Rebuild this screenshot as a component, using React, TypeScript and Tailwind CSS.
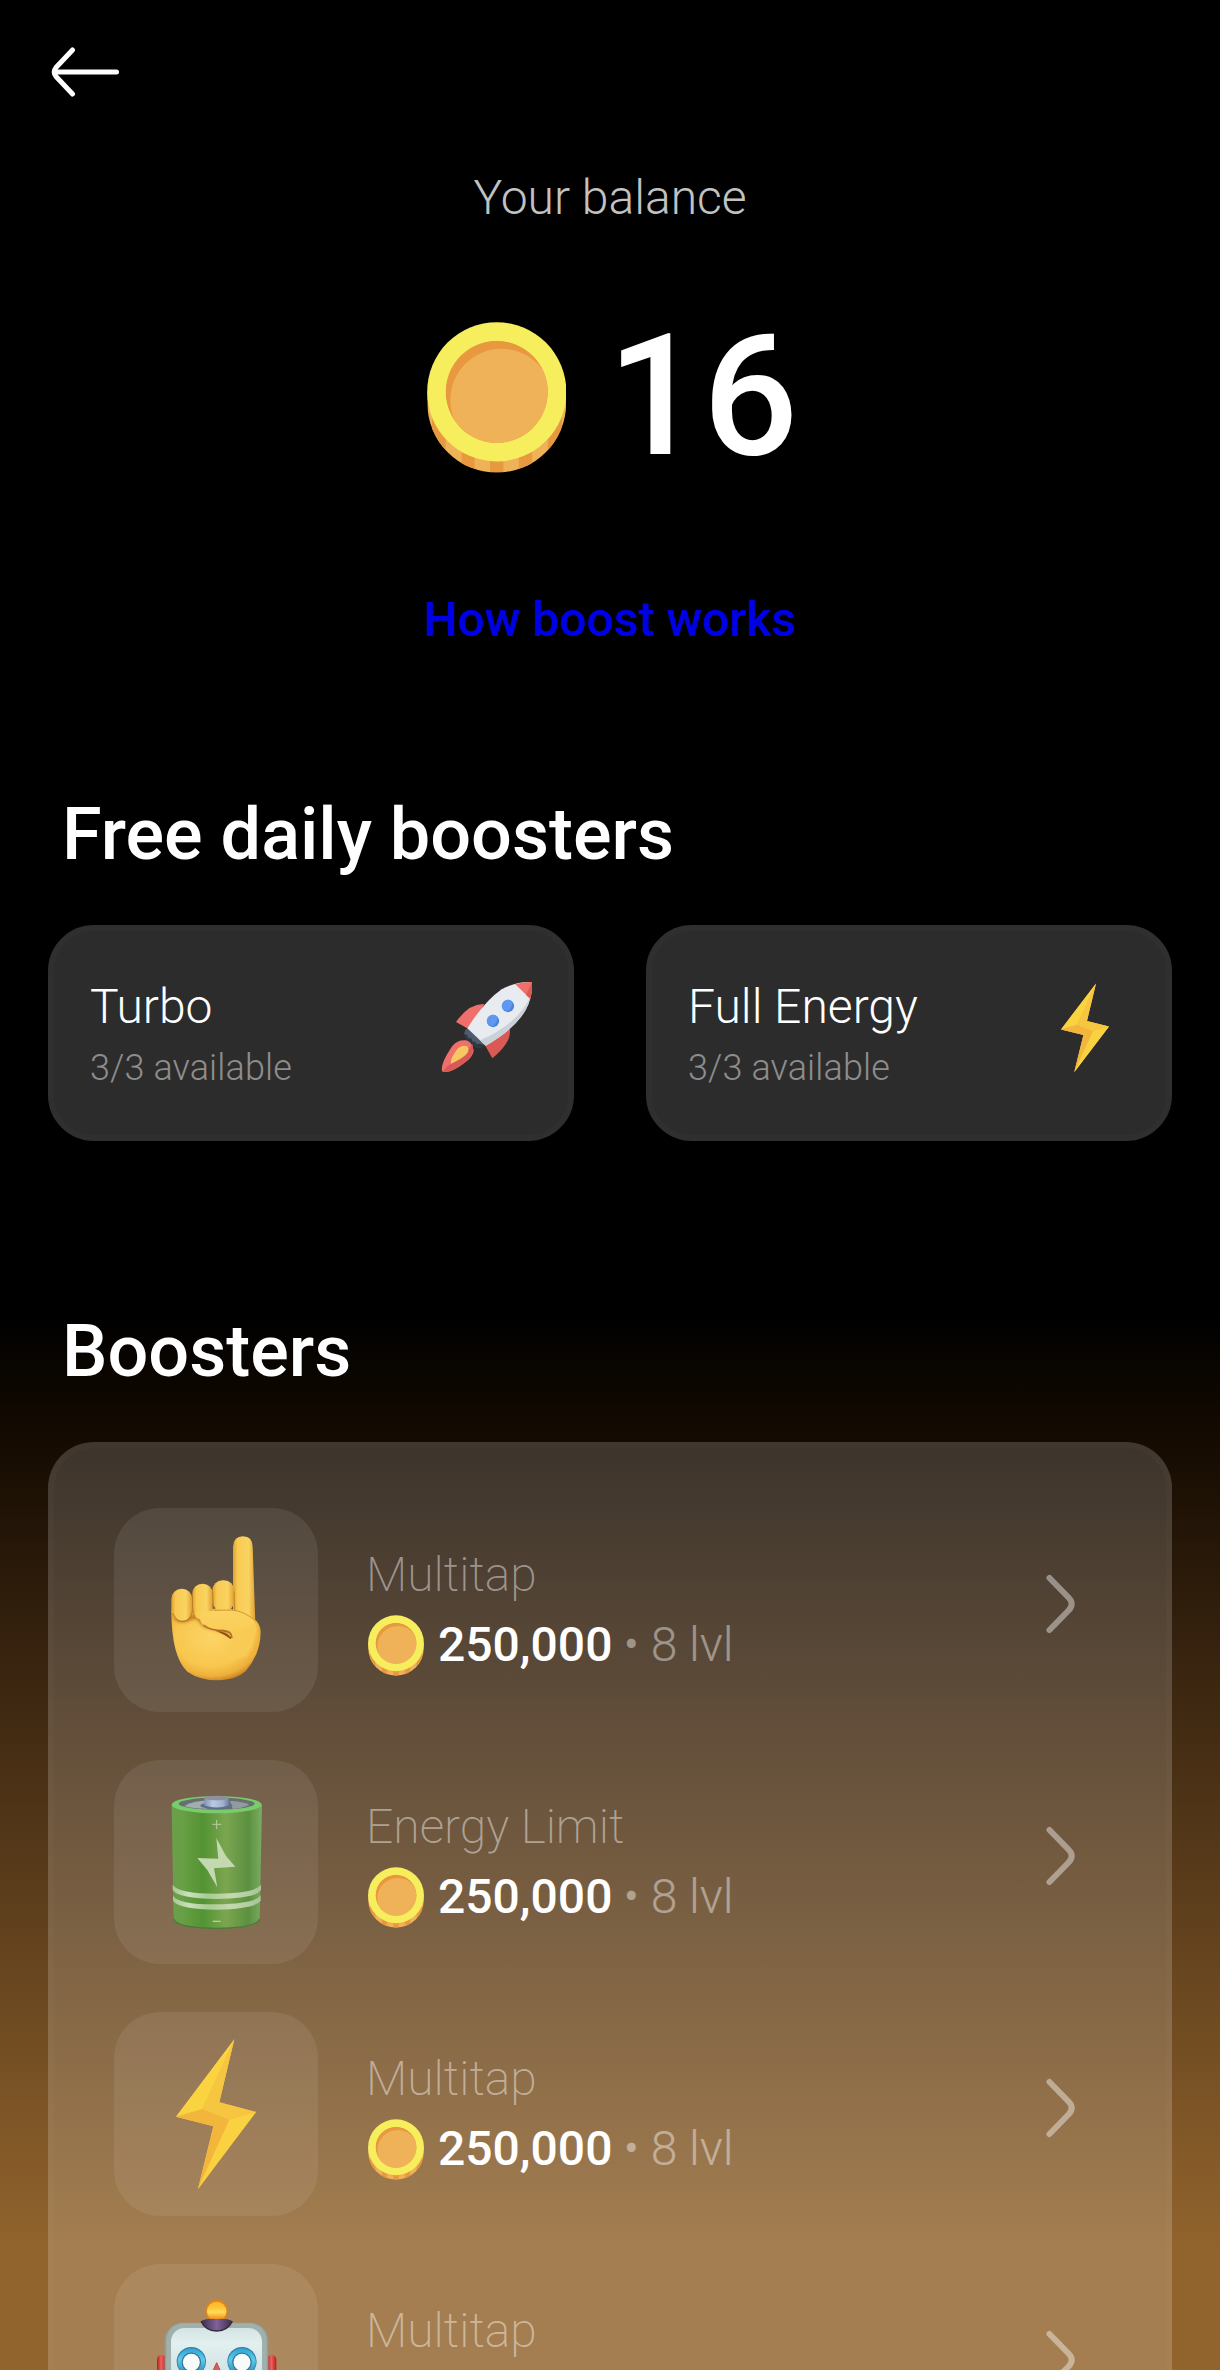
import React from "react";

function BackArrow() {
  return (
    <svg width="72" height="54" viewBox="0 0 72 54" fill="none" stroke="#fff" strokeWidth="5" strokeLinecap="round" strokeLinejoin="round">
      <path d="M22.5 5 L6 22.5 Q2.500 27 6 31.5 L22.5 49" />
      <path d="M5 27 H66.500" />
    </svg>
  );
}

function Chevron() {
  return (
    <svg className="shrink-0" width="34" height="64" viewBox="0 0 34 64" fill="none" stroke="#fff" strokeOpacity="0.42" strokeWidth="6" strokeLinecap="round">
      <path d="M5.5 6 L24.5 25.5 Q31 32 24.5 38.5 L5.5 58" />
    </svg>
  );
}

function Coin({ className, id }: { className: string; id: string }) {
  return (
    <svg className={className} viewBox="82 66 418 452">
      <defs>
        <clipPath id={`${id}-rim`}>
          <path d="M83 275 V309 A208 208 0 0 0 499 309 V275 Z" />
        </clipPath>
        <clipPath id={`${id}-face`}>
          <circle cx="291" cy="275" r="153" />
        </clipPath>
      </defs>
      <g clipPath={`url(#${id}-rim)`}>
        <rect x="82" y="270" width="418" height="250" fill="#f0b259" />
        <path fill="#e8993f" d="M97 275h41v245h-41zM186 275h39v245h-39zM271 275h40v245h-40zM357 275h40v245h-40zM444 275h42v245h-42z" />
      </g>
      <circle cx="291" cy="275" r="208.500" fill="#f6ee5d" />
      <g clipPath={`url(#${id}-face)`}>
        <circle cx="291" cy="275" r="154" fill="#e8993f" />
        <circle cx="305" cy="299" r="153" fill="#f0b259" />
      </g>
    </svg>
  );
}

function Rocket() {
  return (
    <svg className="h-[130px] w-[140px]" viewBox="0 0 420 390">
      <path d="M196 132 Q150 130 111 186 L150 208 Z" fill="#ee6f6b" />
      <path d="M272 207 Q280 245 220 295 L198 256 Z" fill="#d95a55" />
      <path d="M146 204 L200 256 Q188 266 170 261 Q142 245 136 222 Q136 210 146 204 Z" fill="#4e5b6b" />
      <path d="M136 222 l9 3 l3 9 l9 1 l4 10 l8 0 l3 8 l10 -2 l18 5 q-14 12 -30 5 Q142 245 136 222Z" fill="#2d3845" />
      <path d="M145 205 Q195 125 248 88 Q290 64 338 66 Q342 110 320 150 Q285 210 200 257 Z" fill="#e8ebef" />
      <path d="M333 116 Q345 60 331 117 Q290 195 183 241 L200 257 Q285 210 320 150 Q330 132 333 116Z" fill="#cbd1d9" />
      <path d="M289 73 Q313 65 339 66 Q341 92 334 117 Z" fill="#ee6f6b" />
      <path d="M339 66 Q341 92 334 117 L321 104 Q331 85 339 66Z" fill="#d95a55" />
      <circle cx="267" cy="138" r="18.500" fill="#4a83db" />
      <path d="M249 142 a18.500 18.500 0 0 1 31 -17 q1 17 -12 27 q-17 1 -19 -10Z" fill="#6098f1" />
      <circle cx="222" cy="183" r="18.500" fill="#4a83db" />
      <path d="M204 187 a18.500 18.500 0 0 1 31 -17 q1 17 -12 27 q-17 1 -19 -10Z" fill="#6098f1" />
      <path d="M69 334 Q64 310 100 258 Q116 238 142 241 Q163 250 164 273 Q160 294 137 308 Q92 343 69 334 Z" fill="#ee6f6b" />
      <path d="M70 335 L86 318 Q138 290 160 252 Q170 284 137 308 Q90 342 70 335Z" fill="#d95a55" />
      <path d="M96 311 Q91 300 113 270 Q125 255 142 258 Q151 262 147 276 Q137 293 96 311Z" fill="#f7c861" />
    </svg>
  );
}

function BoltShape() {
  return (
    <g>
      <path d="M283 58 L108 290 L220 319 L174 507 L348 276 L238 247 Z" fill="#f6c23e" />
      <path d="M283 58 L108 290 L187 267 Z" fill="#fad341" />
      <path d="M283 58 L187 267 L268 299 L348 276 L238 247 Z" fill="#f7c640" />
      <path d="M108 290 L187 267 L268 299 L174 507 L220 319 Z" fill="#f3b63d" />
      <path d="M348 276 L268 299 L174 507 Z" fill="#f9d141" />
    </g>
  );
}

function HandIcon() {
  return (
    <svg className="h-full w-full" viewBox="-78 -6 612 612">
      <defs>
        <linearGradient id="finger" x1="0" x2="1" y1="0" y2="0">
          <stop offset="0" stopColor="#e0a12f" />
          <stop offset="0.2" stopColor="#f8ca52" />
          <stop offset="0.7" stopColor="#fad361" />
          <stop offset="1" stopColor="#dfa032" />
        </linearGradient>
        <radialGradient id="palm" cx="0.45" cy="0.4" r="0.62">
          <stop offset="0" stopColor="#fcd466" />
          <stop offset="0.65" stopColor="#f8c74e" />
          <stop offset="0.87" stopColor="#eeb03b" />
          <stop offset="1" stopColor="#c8811f" />
        </radialGradient>
        <linearGradient id="thumb" x1="0" x2="0" y1="0" y2="1">
          <stop offset="0" stopColor="#fbd362" />
          <stop offset="0.7" stopColor="#f9cb54" />
          <stop offset="1" stopColor="#f7c64d" />
        </linearGradient>
        <filter id="handSoft" x="-20%" y="-20%" width="140%" height="140%">
          <feGaussianBlur stdDeviation="5" />
        </filter>
        <clipPath id="palmClip">
          <path d="M94 300 Q94 440 142 485 Q180 512 240 511 Q290 508 317 484 Q362 430 362 365 Q360 330 325 318 L270 295 Z" />
        </clipPath>
      </defs>
      <path d="M279 110 Q281 79 309 79 Q337 79 338 110 L346 340 L279 340 Z" fill="url(#finger)" />
      <path d="M94 300 Q94 440 142 485 Q180 512 240 511 Q290 508 317 484 Q362 430 362 365 Q360 330 325 318 L270 295 Z" fill="url(#palm)" />
      <path d="M98 318 Q110 345 140 336 L168 326 L190 352 L274 374 L276 362 L190 310 Z" fill="#b66c1b" opacity="0.75" filter="url(#handSoft)" />
      <rect x="217" y="211" width="66" height="93" rx="31" fill="url(#finger)" />
      <rect x="157" y="221" width="61" height="108" rx="30" fill="url(#finger)" />
      <rect x="94" y="236" width="63" height="97" rx="31" fill="url(#finger)" />
      <path d="M98 310 Q112 343 141 331 Q154 323 158 300" fill="none" stroke="#b87520" strokeWidth="4" opacity="0.7" />
      <path d="M157 255 Q156 310 166 323 M218 245 L221 299 M282 245 L284 299" fill="none" stroke="#b57720" strokeWidth="3" opacity="0.7" />
      <path d="M180 319 Q182 303 202 304 L275 301 Q310 302 342 328 L350 360 L330 410 L275 410 Q282 372 256 362 Q205 360 190 345 Q178 334 180 319 Z" fill="url(#thumb)" />
      <g clipPath="url(#palmClip)">
        <path d="M274 405 Q279 390 278 372 L352 340 Q352 390 320 440 L255 450 Z" fill="#f9cb54" filter="url(#handSoft)" />
      </g>
      <path d="M276 384 Q275 363 251 362 Q208 361 191 345" fill="none" stroke="#9c5714" strokeWidth="5" opacity="0.75" />
      <path d="M228 363 Q257 363 275 384 L271 387 Q257 375 228 363Z" fill="#8f4e12" />
      <path d="M222 301 L275 300 Q312 303 346 332" fill="none" stroke="#c98825" strokeWidth="3" opacity="0.8" />
    </svg>
  );
}

function BatteryIcon() {
  return (
    <svg className="h-full w-full" viewBox="-78 -30 612 612">
      <defs>
        <linearGradient id="cell" x1="0" x2="1" y1="0" y2="0">
          <stop offset="0" stopColor="#6b9f4c" />
          <stop offset="0.12" stopColor="#68a045" />
          <stop offset="0.35" stopColor="#539334" />
          <stop offset="0.6" stopColor="#7ba650" />
          <stop offset="0.85" stopColor="#5b9040" />
          <stop offset="1" stopColor="#7bac63" />
        </linearGradient>
        <linearGradient id="knob" x1="0" x2="1" y1="0" y2="0">
          <stop offset="0" stopColor="#8294b2" />
          <stop offset="0.35" stopColor="#bccae2" />
          <stop offset="0.75" stopColor="#a0b1cf" />
          <stop offset="1" stopColor="#6f7f9b" />
        </linearGradient>
        <linearGradient id="band" x1="0" x2="1" y1="0" y2="0">
          <stop offset="0" stopColor="#a5c990" />
          <stop offset="0.18" stopColor="#cbe0bd" />
          <stop offset="0.4" stopColor="#a9cb92" />
          <stop offset="0.65" stopColor="#c5d9b0" />
          <stop offset="1" stopColor="#a6c594" />
        </linearGradient>
      </defs>
      <path d="M95 104 L101 449 Q110 474 230 475 Q350 474 359 449 L366 104 Z" fill="url(#cell)" />
      <path d="M101 447 Q110 474 230 475 Q350 474 359 447" fill="none" stroke="#477b38" strokeWidth="4" />
      <ellipse cx="230" cy="104" rx="135" ry="26" fill="#79cb6c" />
      <ellipse cx="230" cy="101" rx="114" ry="18" fill="#66706f" />
      <path d="M133 108 Q160 92 215 91 L200 116 Q155 116 133 108Z" fill="#a3acb0" />
      <path d="M270 93 Q310 94 328 105 Q303 116 278 117Z" fill="#929b9f" />
      <ellipse cx="229" cy="107" rx="48" ry="10" fill="#5d708a" />
      <path d="M193 85 V106 Q230 119 267 106 V85 Z" fill="url(#knob)" />
      <ellipse cx="230" cy="84" rx="37" ry="7" fill="#8d919b" />
      <path d="M229 204 L258 258 L286 290 L222 295 L232 352 L202 300 L172 264 L235 266 Z" fill="#c4d9b0" />
      <path d="M230 150 V177 M217 163 H244" stroke="#b4d09b" strokeWidth="3" />
      <path d="M218 454 H242" stroke="#b4d09b" strokeWidth="4" />
      <path d="M98 344 Q115 371 230 371 Q345 370 363 344 L363 360 Q345 386 230 387 Q115 386 98 360 Z" fill="url(#band)" />
      <path d="M99 377 Q115 404 230 403 Q345 402 362 376 L362 392 Q345 417 230 419 Q115 418 99 392 Z" fill="url(#band)" />
    </svg>
  );
}

function BoltIcon() {
  return (
    <svg className="h-full w-full" viewBox="-78 -24 612 612">
      <BoltShape />
    </svg>
  );
}

function RobotEye({ cx }: { cx: number }) {
  return (
    <g>
      <circle cx={cx} cy="335" r="44" fill="#2f7da6" />
      <circle cx={cx} cy="336" r="35" fill="none" stroke="url(#iris)" strokeWidth="13" />
      <circle cx={cx} cy="337" r="29" fill="#2f7596" />
      <circle cx={cx} cy="337" r="25.500" fill="#f8fbfc" />
    </g>
  );
}

function RobotIcon() {
  return (
    <svg className="h-full w-full" viewBox="42 42 612 612">
      <defs>
        <linearGradient id="lamp" x1="0" x2="0" y1="0" y2="1">
          <stop offset="0" stopColor="#ffb52a" />
          <stop offset="0.3" stopColor="#fdc535" />
          <stop offset="0.55" stopColor="#ffdc5a" />
          <stop offset="0.8" stopColor="#fba326" />
          <stop offset="1" stopColor="#f08a16" />
        </linearGradient>
        <linearGradient id="iris" x1="0" x2="0" y1="0" y2="1">
          <stop offset="0" stopColor="#38a9d6" />
          <stop offset="0.4" stopColor="#5bcde8" />
          <stop offset="1" stopColor="#2b87b6" />
        </linearGradient>
        <linearGradient id="ear" x1="0" x2="1" y1="0" y2="0">
          <stop offset="0" stopColor="#b0201f" />
          <stop offset="0.45" stopColor="#f0625d" />
          <stop offset="1" stopColor="#b81c20" />
        </linearGradient>
        <linearGradient id="cap" x1="0" x2="1" y1="0" y2="0">
          <stop offset="0" stopColor="#3b2b47" />
          <stop offset="0.5" stopColor="#7f6299" />
          <stop offset="1" stopColor="#3b2b47" />
        </linearGradient>
        <linearGradient id="face" x1="0" x2="0" y1="0" y2="1">
          <stop offset="0" stopColor="#d3e3e3" />
          <stop offset="0.15" stopColor="#e3f0f0" />
          <stop offset="0.45" stopColor="#d3e2e3" />
          <stop offset="1" stopColor="#c0d1d2" />
        </linearGradient>
      </defs>
      <rect x="171" y="315" width="28" height="100" rx="14" fill="url(#ear)" />
      <rect x="501" y="315" width="28" height="100" rx="14" fill="url(#ear)" />
      <rect x="194" y="218" width="311" height="330" rx="54" fill="#8e9f9b" />
      <rect x="199" y="220" width="301" height="326" rx="51" fill="#a0b1ad" />
      <rect x="213" y="234" width="273" height="300" rx="40" fill="url(#face)" />
      <circle cx="350" cy="183" r="34" fill="#de8420" />
      <circle cx="350" cy="184" r="29" fill="url(#lamp)" />
      <path d="M303 213 Q320 204 350 207 Q380 204 397 213 Q384 243 350 243 Q316 243 303 213 Z" fill="url(#cap)" />
      <path d="M303 214 Q316 243 350 243 Q384 243 397 214" fill="none" stroke="#35283f" strokeWidth="4" />
      <RobotEye cx={274} />
      <RobotEye cx={426} />
      <path d="M350 338 L330 382 H370 Z" fill="#df5d58" stroke="#bc4646" strokeWidth="3" />
    </svg>
  );
}

function DailyCard({ title, children }: { title: string; children: React.ReactNode }) {
  return (
    <div className="flex h-[216px] items-center justify-between rounded-[46px] border-[6px] border-[#2f2f2f] bg-[#2c2c2c] pl-9">
      <div className="pt-[3px]">
        <div className="text-[48px] leading-[56px] font-light text-white">{title}</div>
        <div className="mt-[11px] text-[36px] leading-[44px] font-light tracking-[0.1px] text-[#8d8d8d]">3/3 available</div>
      </div>
      {children}
    </div>
  );
}

const boosters = [
  { title: "Multitap", price: "250,000", icon: <HandIcon /> },
  { title: "Energy Limit", price: "250,000", icon: <BatteryIcon /> },
  { title: "Multitap", price: "250,000", icon: <BoltIcon /> },
  { title: "Multitap", price: null, icon: <RobotIcon /> },
];

export default function App() {
  return (
    <main className="h-[2370px] w-full overflow-hidden bg-[linear-gradient(180deg,#000_0px,#000_1310px,#150b01_1440px,#3a2510_1670px,#92642d_2250px,#92642d_2370px)] font-['Roboto',sans-serif]">
      <header className="h-[170px] pt-[45px] pl-[50px]">
        <BackArrow />
      </header>
      <section className="flex flex-col items-center">
        <p className="text-[48px] leading-[56px] font-light text-[#c2c2c2]">Your balance</p>
        <div className="mt-[86px] flex h-[168px] items-center gap-[41px] pl-[5px]">
          <Coin id="balance" className="mt-[3px] h-[151px] w-[139.500px]" />
          <span className="pt-[2px] text-[168px] leading-[168px] font-medium text-white">16</span>
        </div>
        <a className="mt-[112px] text-[48px] leading-[56px] font-medium text-[#0000e6]">How boost works</a>
      </section>
      <section className="mt-[145px] px-12">
        <h2 className="pl-[14px] text-[72px] leading-[84px] font-medium text-white">Free daily boosters</h2>
        <div className="mt-12 grid grid-cols-2 gap-[72px]">
          <DailyCard title="Turbo">
            <div className="mr-[9px] -mt-[16px]">
              <Rocket />
            </div>
          </DailyCard>
          <DailyCard title="Full Energy">
            <svg className="mr-[55px] -mt-[10px] h-[92px] w-[52px]" viewBox="98 50 260 466" preserveAspectRatio="none">
              <BoltShape />
            </svg>
          </DailyCard>
        </div>
      </section>
      <section className="mt-[169px] px-12">
        <h2 className="pl-[14px] text-[72px] leading-[84px] font-medium text-white">Boosters</h2>
        <div className="mt-12 flex flex-col gap-12 rounded-t-[46px] border-[6px] border-b-0 border-white/2 bg-white/17 px-[60px] pt-[60px]">
          {boosters.map((b, i) => (
            <div key={i} className="flex items-center">
              <div className="h-[204px] w-[204px] shrink-0 rounded-[46px] bg-white/8">{b.icon}</div>
              <div className="ml-12 flex-1">
                <div className="text-[48px] leading-[56px] font-extralight text-white/45">{b.title}</div>
                <div className="mt-[14px] flex h-[56px] items-center text-[48px] leading-[56px]">
                  {b.price && (
                    <>
                      <Coin id={`price-${i}`} className="mr-[14px] ml-[2px] h-[61px] w-[56px]" />
                      <span className="font-medium text-white">{b.price}</span>
                      <span className="ml-[11px] font-light whitespace-pre text-white/42">• 8 lvl</span>
                    </>
                  )}
                </div>
              </div>
              <div className="mr-[28px] -mt-[12px]">
                <Chevron />
              </div>
            </div>
          ))}
        </div>
      </section>
    </main>
  );
}
